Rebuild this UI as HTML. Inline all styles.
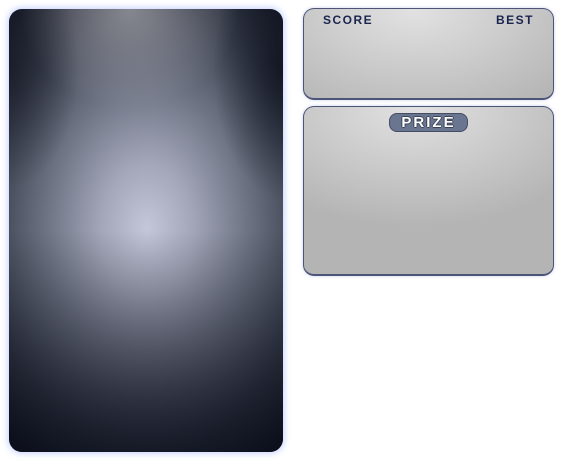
<!DOCTYPE html>
<html><head><style>
html,body{margin:0;padding:0;width:570px;height:465px;background:#fff;overflow:hidden;font-family:"Liberation Sans",sans-serif;}
.left{position:absolute;left:9px;top:9px;width:274px;height:443px;border-radius:13px;
background:radial-gradient(ellipse 210px 300px at 138px 220px,#c3c7d9 0%,#a2a6b8 22%,#6e7384 48%,#3a3f4d 75%,#141824 100%);
box-shadow:0 0 6px 2px rgba(120,150,255,0.35);overflow:hidden;}
.left:before{content:"";position:absolute;inset:0;background:radial-gradient(ellipse 110px 100px at 120px 0px,rgba(165,165,170,0.7),rgba(150,150,160,0) 100%);}
.left:after{content:"";position:absolute;inset:0;background:linear-gradient(to bottom,rgba(0,0,0,0) 50%,rgba(5,8,20,0.7) 100%),radial-gradient(ellipse 70px 120px at 0px 60px,rgba(15,18,30,0.6),rgba(15,18,30,0)),radial-gradient(ellipse 70px 130px at 274px 60px,rgba(10,14,26,0.75),rgba(10,14,26,0));}
.panel{position:absolute;left:303px;width:249px;border:1px solid #4c5478;border-bottom-width:2px;border-radius:11px;
background:radial-gradient(ellipse 200px 120px at 110px 0px,#e2e2e2,#b4b4b4);box-shadow:0 0 3px rgba(120,140,220,0.4);}
.p1{top:8px;height:89px;}
.p2{top:106px;height:167px;}
.lbl{position:absolute;top:4px;font-size:12px;font-weight:bold;color:#1a2550;letter-spacing:1.5px;}
.badge{position:absolute;left:85px;top:6px;width:79px;height:19px;background:#6a7590;border-radius:8px;border:1px solid #454d66;box-sizing:border-box;
color:#fff;font-weight:bold;font-size:15px;text-align:center;line-height:17px;letter-spacing:2px;
text-shadow:1px 0 #3a4258,-1px 0 #3a4258,0 1px #3a4258,0 -1px #3a4258;}
</style></head><body>
<div class="left"></div>
<div class="panel p1"><span class="lbl" style="left:19px">SCORE</span><span class="lbl" style="left:192px">BEST</span></div>
<div class="panel p2"><div class="badge">PRIZE</div></div>
</body></html>
